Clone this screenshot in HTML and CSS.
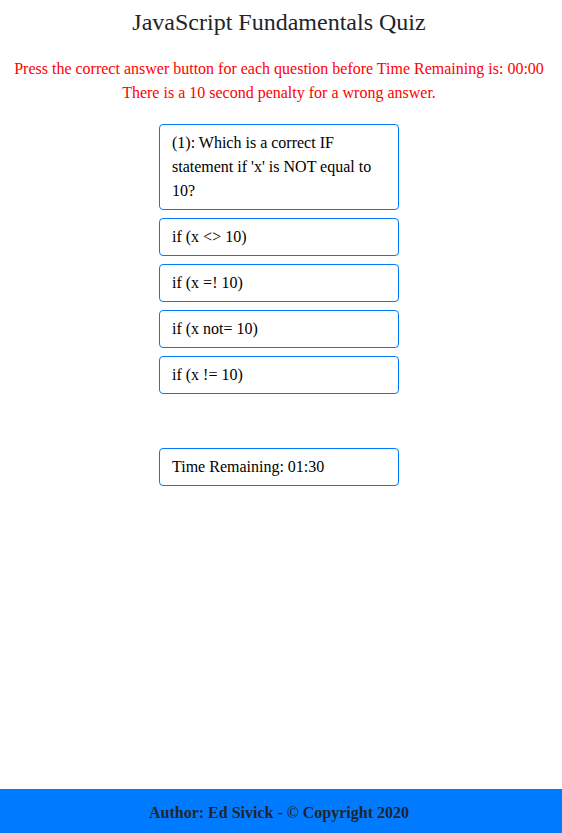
FILE: index.html
```html
<!DOCTYPE html>
<html lang="en">
<head>
<meta charset="utf-8">
<title>JavaScript Fundamentals Quiz</title>
<link rel="stylesheet" href="styles.css">
</head>
<body>
<div class="page">
  <main class="main">
    <h1 class="title">JavaScript Fundamentals Quiz</h1>
    <p class="instructions">Press the correct answer button for each question before Time Remaining is: 00:00<br>There is a 10 second penalty for a wrong answer.</p>
    <div class="quiz">
      <div class="box">(1): Which is a correct IF statement if 'x' is NOT equal to 10?</div>
      <div class="box answer">if (x &lt;&gt; 10)</div>
      <div class="box answer">if (x =! 10)</div>
      <div class="box answer">if (x not= 10)</div>
      <div class="box answer">if (x != 10)</div>
      <div class="box timer">Time Remaining: 01:30</div>
    </div>
  </main>
  <footer class="footer">Author: Ed Sivick - © Copyright 2020</footer>
</div>
</body>
</html>
```
FILE: styles.css
```css
* { box-sizing: border-box; }
html, body { margin: 0; padding: 0; }
body {
  font-family: "Liberation Serif", "Times New Roman", serif;
  font-size: 16px;
  line-height: 24px;
  color: #212529;
  background: #fff;
}
.page {
  min-height: 100vh;
  display: flex;
  flex-direction: column;
}
.main {
  flex: 1;
  padding-right: 4px;
}
.title {
  margin: 8px 0 20px;
  font-size: 24px;
  font-weight: normal;
  line-height: 29px;
  text-align: center;
}
.instructions {
  margin: 0 0 19px;
  color: #ff0000;
  text-align: center;
}
.quiz {
  width: 240px;
  margin: 0 auto;
  display: flex;
  flex-direction: column;
  gap: 8px;
}
.box {
  border: 1px solid #007bff;
  border-radius: 4px;
  padding: 6px 12px;
  color: #000;
}
.timer { margin-top: 46px; }
.footer {
  background: #007bff;
  height: 44px;
  padding: 4px 4px 0 0;
  display: flex;
  align-items: center;
  justify-content: center;
  font-weight: bold;
  color: #212529;
}
```
